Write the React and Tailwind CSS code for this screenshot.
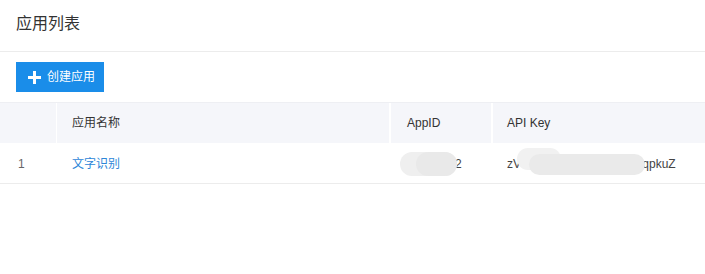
import React from 'react';

const font = "font-['Liberation_Sans','Noto_Sans_CJK_SC',sans-serif]";

const Blob = ({ className }) => (
  <span className={`absolute rounded-full ${className}`}></span>
);

export default function App() {
  return (
    <div className={`w-[705px] h-[274px] bg-white ${font} text-[#333]`}>
      {/* Header */}
      <div className="h-[52px] border-b border-[#ececec] px-4 flex items-center">
        <h1 className="text-[16px] leading-none text-[#333] -mt-[4px]">应用列表</h1>
      </div>

      {/* Toolbar */}
      <div className="px-4 pt-[10px] pb-[10px]">
        <button className="h-[30px] w-[88px] bg-[#1a8de9] text-white text-[12px] flex items-center pl-[12px] gap-[6px]">
          <svg width="13" height="13" viewBox="0 0 13 13">
            <path d="M5 0h3v5h5v3H8v5H5V8H0V5h5z" fill="white" />
          </svg>
          <span>创建应用</span>
        </button>
      </div>

      {/* Table */}
      <div className="text-[12px]">
        <div className="grid grid-cols-[57px_334px_102px_1fr] h-[41px] bg-[#f5f6fa] border-t border-[#eeeff3]">
          <div className="border-r border-white"></div>
          <div className="border-r-2 border-white flex items-center pl-[15px]">应用名称</div>
          <div className="border-r-2 border-white flex items-center pl-[16px]">AppID</div>
          <div className="flex items-center pl-[14px]">API Key</div>
        </div>
        <div className="grid grid-cols-[57px_334px_102px_1fr] h-[41px] border-b border-[#ececec] pt-[2px]">
          <div className="flex items-center pl-[18px] text-[#666]">1</div>
          <div className="flex items-center pl-[15px] text-[#2d86d8]">文字识别</div>
          <div className="flex items-center pl-[16px] text-[#444]">
            <span className="relative inline-block w-[46px] h-[16px] mr-[2px]">
              <Blob className="left-[-7px] top-[-4px] w-[57px] h-[24px] bg-[#efefef]" />
              <Blob className="left-[9px] top-[-4px] w-[41px] h-[24px] bg-[#e9e9e9]" />
            </span>
            <span>2</span>
          </div>
          <div className="flex items-center pl-[14px] text-[#444]">
            <span>zV</span>
            <span className="relative inline-block w-[118px] h-[16px]">
              <Blob className="left-[-4px] top-[-8px] w-[44px] h-[22px] bg-[#f1f1f1]" />
              <Blob className="left-[8px] top-[-2px] w-[116px] h-[21px] bg-[#eaeaea]" />
            </span>
            <span>/qpkuZ</span>
          </div>
        </div>
      </div>
    </div>
  );
}
